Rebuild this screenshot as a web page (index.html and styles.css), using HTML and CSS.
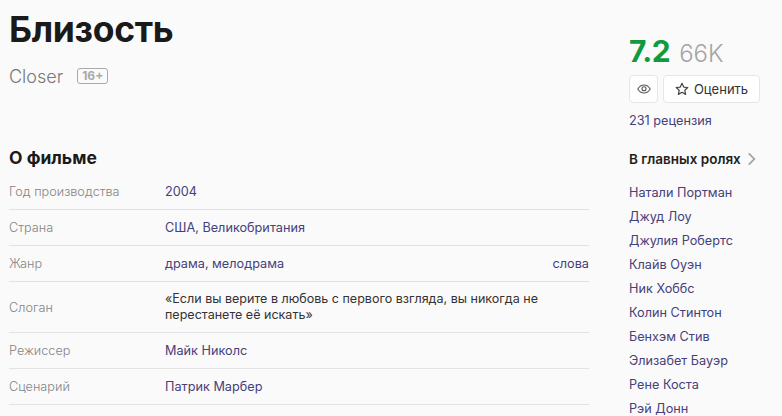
FILE: index.html
```html
<!DOCTYPE html>
<html lang="ru">
<head>
<meta charset="utf-8">
<title>Близость</title>
<link rel="stylesheet" href="styles.css">
</head>
<body>
<div class="page">
  <main class="main">
    <h1 class="title">Близость</h1>
    <div class="orig"><span class="orig-name">Closer</span><span class="age">16+</span></div>
    <h2 class="about">О фильме</h2>
    <div class="table">
      <div class="row"><div class="key">Год производства</div><div class="val"><a class="link">2004</a></div></div>
      <div class="row"><div class="key">Страна</div><div class="val"><a class="link">США, Великобритания</a></div></div>
      <div class="row"><div class="key">Жанр</div><div class="val spread"><a class="link">драма, мелодрама</a><a class="link">слова</a></div></div>
      <div class="row tall"><div class="key">Слоган</div><div class="val slogan">«Если вы верите в любовь с первого взгляда, вы никогда не перестанете её искать»</div></div>
      <div class="row"><div class="key">Режиссер</div><div class="val"><a class="link">Майк Николс</a></div></div>
      <div class="row"><div class="key">Сценарий</div><div class="val"><a class="link">Патрик Марбер</a></div></div>
    </div>
  </main>
  <aside class="side">
    <div class="rating"><span class="score">7.2</span><span class="votes">66K</span></div>
    <div class="actions">
      <button class="btn btn-eye" aria-label="Буду смотреть">
        <svg width="14" height="10" viewBox="0 0 14 10" fill="none" stroke="#555" stroke-width="1.1"><path d="M.8 5C2.4 2.2 4.5 1 7 1s4.6 1.2 6.2 4C11.6 7.8 9.500 9 7 9S2.400 7.800.8 5Z"/><circle cx="7" cy="4.800" r="2"/></svg>
      </button>
      <button class="btn btn-rate">
        <svg width="14" height="14" viewBox="0 0 13 13" fill="none" stroke="#444" stroke-width="1.100"><path d="M6.500 1.200 8.100 4.700l3.800.4-2.800 2.600.8 3.800-3.400-2-3.400 2 .8-3.800L1.100 5.100l3.800-.4Z" stroke-linejoin="round"/></svg>
        Оценить
      </button>
    </div>
    <a class="link reviews">231 рецензия</a>
    <div class="cast-head">В главных ролях<svg width="9" height="14" viewBox="0 0 8 12" fill="none" stroke="#a0a0a0" stroke-width="1.500"><path d="M1.500 1 6.500 6l-5 5"/></svg></div>
    <ul class="cast">
      <li><a class="link">Натали Портман</a></li>
      <li><a class="link">Джуд Лоу</a></li>
      <li><a class="link">Джулия Робертс</a></li>
      <li><a class="link">Клайв Оуэн</a></li>
      <li><a class="link">Ник Хоббс</a></li>
      <li><a class="link">Колин Стинтон</a></li>
      <li><a class="link">Бенхэм Стив</a></li>
      <li><a class="link">Элизабет Бауэр</a></li>
      <li><a class="link">Рене Коста</a></li>
      <li><a class="link">Рэй Донн</a></li>
    </ul>
  </aside>
</div>
</body>
</html>
```
FILE: styles.css
```css
html, body {
  margin: 0;
  height: 416px;
  overflow: hidden;
  background: #fafafa;
}
body {
  font-family: Inter, "Liberation Sans", sans-serif;
  font-size: 12.700px;
  color: #1f1f1f;
}
.page {
  display: flex;
  padding-left: 9px;
}
.main {
  width: 580px;
  flex: none;
}
.side {
  margin-left: 40px;
  width: 140px;
  flex: none;
  padding-top: 32px;
}
.title {
  margin: 9px 0 0;
  font-size: 35.500px;
  line-height: 42px;
  font-weight: 700;
  color: #1a1a1a;
  letter-spacing: -0.3px;
}
.orig {
  display: flex;
  align-items: center;
  margin-top: 14px;
  height: 22px;
}
.orig-name {
  font-size: 18px;
  font-weight: 300;
  color: #777;
}
.age {
  margin-left: 14px;
  border: 1px solid #aaa;
  border-radius: 3px;
  font-size: 12px;
  font-weight: 700;
  color: #aaa;
  line-height: 14px;
  padding: 0 4px;
}
.about {
  margin: 60px 0 0;
  font-size: 17.500px;
  line-height: 22px;
  font-weight: 700;
  color: #1a1a1a;
}
.table {
  margin-top: 5px;
}
.row {
  display: flex;
  border-bottom: 1px solid #e3e3e3;
  height: 35px;
  align-items: center;
}
.row.tall {
  height: 50px;
}
.key {
  width: 156px;
  flex: none;
  color: #858585;
  font-weight: 300;
}
.val {
  flex: 1;
  min-width: 0;
}
.spread {
  display: flex;
  justify-content: space-between;
}
.slogan {
  line-height: 16px;
  color: #333;
  padding-right: 20px;
  font-size: 12.540px;
}
.link {
  color: #45417a;
  text-decoration: none;
}
.rating {
  display: flex;
  align-items: baseline;
  height: 40px;
}
.score {
  font-size: 30px;
  line-height: 38px;
  font-weight: 700;
  color: #0f9a3f;
  letter-spacing: -0.5px;
}
.votes {
  margin-left: 9px;
  font-size: 24px;
  font-weight: 300;
  color: #a5a5a5;
}
.actions {
  display: flex;
  gap: 5px;
  margin-top: 3px;
}
.btn {
  height: 28px;
  border: 1px solid #e6e6e6;
  border-radius: 4px;
  background: #fff;
  font: inherit;
  font-size: 13px;
  color: #333;
  display: flex;
  align-items: center;
  justify-content: center;
  padding: 0;
}
.btn-eye {
  width: 29px;
}
.btn-rate {
  width: 97px;
  gap: 5px;
}
.reviews {
  display: block;
  margin-top: 10px;
  line-height: 16px;
}
.cast-head {
  display: flex;
  align-items: center;
  gap: 6px;
  margin-top: 22px;
  font-weight: 600;
  font-size: 13.500px;
  line-height: 16px;
  color: #1f1f1f;
}
.cast {
  list-style: none;
  margin: 14px 0 0;
  padding: 0;
}
.cast li {
  height: 24px;
  line-height: 24px;
}
```
